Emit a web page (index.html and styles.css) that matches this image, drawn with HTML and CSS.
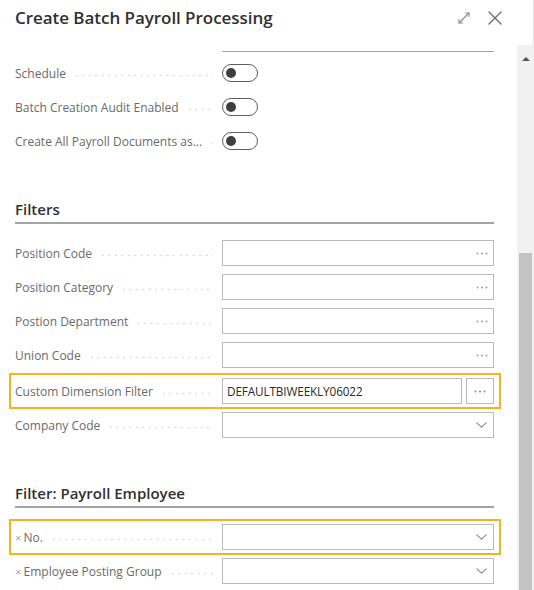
FILE: index.html
```html
<!DOCTYPE html>
<html lang="en">
<head>
<meta charset="utf-8">
<title>Create Batch Payroll Processing</title>
<link rel="stylesheet" href="styles.css">
</head>
<body>
<div class="dialog">
  <header class="dlg-head">
    <h1 class="dlg-title">Create Batch Payroll Processing</h1>
    <div class="dlg-actions">
      <button class="icon-btn" aria-label="Expand">
        <svg width="16" height="16" viewBox="0 0 16 16" fill="none" stroke="#8a8a8a" stroke-width="1.1" stroke-linecap="round" stroke-linejoin="round">
          <path d="M3 13 L13 3"/>
          <path d="M9.5 3 H13 V6.5"/>
          <path d="M3 9.5 V13 H6.5"/>
        </svg>
      </button>
      <button class="icon-btn" aria-label="Close">
        <svg width="16" height="16" viewBox="0 0 16 16" fill="none" stroke="#6a6a6a" stroke-width="1.3" stroke-linecap="round">
          <path d="M2 2 L14 14 M14 2 L2 14"/>
        </svg>
      </button>
    </div>
  </header>

  <div class="dlg-body">
    <div class="scroll-area">
      <div class="prev-rule"></div>

      <div class="fields">
        <div class="row">
          <div class="label"><span>Schedule</span><i class="leader"></i></div>
          <div class="control"><span class="toggle"><span class="knob"></span></span></div>
        </div>
        <div class="row">
          <div class="label"><span>Batch Creation Audit Enabled</span><i class="leader"></i></div>
          <div class="control"><span class="toggle"><span class="knob"></span></span></div>
        </div>
        <div class="row">
          <div class="label"><span>Create All Payroll Documents as...</span><i class="leader"></i></div>
          <div class="control"><span class="toggle"><span class="knob"></span></span></div>
        </div>
      </div>

      <section class="group">
        <h2 class="group-title">Filters</h2>
        <div class="fields">
          <div class="row">
            <div class="label"><span>Position Code</span><i class="leader"></i></div>
            <div class="control"><div class="input lookup"><svg class="dots" width="12" height="3" viewBox="0 0 12 3" fill="#a0a0a0"><circle cx="1.5" cy="1.5" r="1"/><circle cx="6" cy="1.5" r="1"/><circle cx="10.5" cy="1.5" r="1"/></svg></div></div>
          </div>
          <div class="row">
            <div class="label"><span>Position Category</span><i class="leader"></i></div>
            <div class="control"><div class="input lookup"><svg class="dots" width="12" height="3" viewBox="0 0 12 3" fill="#a0a0a0"><circle cx="1.5" cy="1.5" r="1"/><circle cx="6" cy="1.5" r="1"/><circle cx="10.5" cy="1.5" r="1"/></svg></div></div>
          </div>
          <div class="row">
            <div class="label"><span>Postion Department</span><i class="leader"></i></div>
            <div class="control"><div class="input lookup"><svg class="dots" width="12" height="3" viewBox="0 0 12 3" fill="#a0a0a0"><circle cx="1.5" cy="1.5" r="1"/><circle cx="6" cy="1.5" r="1"/><circle cx="10.5" cy="1.5" r="1"/></svg></div></div>
          </div>
          <div class="row">
            <div class="label"><span>Union Code</span><i class="leader"></i></div>
            <div class="control"><div class="input lookup"><svg class="dots" width="12" height="3" viewBox="0 0 12 3" fill="#a0a0a0"><circle cx="1.5" cy="1.5" r="1"/><circle cx="6" cy="1.5" r="1"/><circle cx="10.5" cy="1.5" r="1"/></svg></div></div>
          </div>
          <div class="row row-focus row-gap">
            <div class="label"><span>Custom Dimension Filter</span><i class="leader"></i></div>
            <div class="control split">
              <div class="input value">DEFAULTBIWEEKLY06022</div>
              <div class="input assist"><svg width="12" height="3" viewBox="0 0 12 3" fill="#8a8a8a"><circle cx="1.5" cy="1.5" r="1"/><circle cx="6" cy="1.5" r="1"/><circle cx="10.5" cy="1.5" r="1"/></svg></div>
            </div>
          </div>
          <div class="row">
            <div class="label"><span>Company Code</span><i class="leader"></i></div>
            <div class="control"><div class="input select"><svg class="chev" width="11" height="6" viewBox="0 0 11 6" fill="none" stroke="#8a8a8a" stroke-width="1.1" stroke-linecap="round" stroke-linejoin="round"><path d="M0.8 0.8 L5.5 5.2 L10.2 0.8"/></svg></div></div>
          </div>
        </div>
      </section>

      <section class="group">
        <h2 class="group-title">Filter: Payroll Employee</h2>
        <div class="fields">
          <div class="row row-focus">
            <div class="label"><span class="x">×</span><span>No.</span><i class="leader"></i></div>
            <div class="control"><div class="input select"><svg class="chev" width="11" height="6" viewBox="0 0 11 6" fill="none" stroke="#8a8a8a" stroke-width="1.1" stroke-linecap="round" stroke-linejoin="round"><path d="M0.8 0.8 L5.5 5.2 L10.2 0.8"/></svg></div></div>
          </div>
          <div class="row">
            <div class="label"><span class="x">×</span><span>Employee Posting Group</span><i class="leader"></i></div>
            <div class="control"><div class="input select"><svg class="chev" width="11" height="6" viewBox="0 0 11 6" fill="none" stroke="#8a8a8a" stroke-width="1.1" stroke-linecap="round" stroke-linejoin="round"><path d="M0.8 0.8 L5.5 5.2 L10.2 0.8"/></svg></div></div>
          </div>
        </div>
      </section>
    </div>

    <div class="scrollbar">
      <span class="scroll-up"></span>
      <div class="scroll-thumb"></div>
    </div>
  </div>
</div>
</body>
</html>
```

FILE: styles.css
```css
* {
  box-sizing: border-box;
}

html, body {
  margin: 0;
  padding: 0;
  background: #ffffff;
}

body {
  font-family: "Open Sans", "Noto Sans", sans-serif;
  color: #333333;
}

.dialog {
  width: 534px;
  height: 590px;
  display: flex;
  flex-direction: column;
  overflow: hidden;
  background: #ffffff;
}

/* ---------- header ---------- */
.dlg-head {
  height: 45px;
  flex: none;
  display: flex;
  align-items: flex-start;
  justify-content: space-between;
  padding: 6px 0 0 15px;
  border-right: 1px solid #e4e4e4;
}

.dlg-title {
  margin: 0;
  font-size: 17px;
  line-height: 24px;
  font-weight: 600;
  color: #303030;
  letter-spacing: -0.05px;
}

.dlg-actions {
  display: flex;
  gap: 15px;
  padding: 4px 30px 0 0;
}

.icon-btn {
  width: 16px;
  height: 16px;
  padding: 0;
  border: 0;
  background: none;
  display: block;
}

.icon-btn svg {
  display: block;
}

/* ---------- body ---------- */
.dlg-body {
  flex: 1;
  display: flex;
  min-height: 0;
}

.scroll-area {
  flex: 1;
  padding: 0 23px 0 15px;
  overflow: hidden;
}

.prev-rule {
  height: 1px;
  margin: 6px 0 4px 207px;
  background: #a6a6a6;
}

.fields {
  display: flex;
  flex-direction: column;
}

.row {
  position: relative;
  height: 34px;
  display: grid;
  grid-template-columns: 207px 1fr;
  align-items: center;
}

.row-gap {
  margin-top: 2px;
}

.row-focus::after {
  content: "";
  position: absolute;
  left: -6px;
  right: -7px;
  top: -1px;
  bottom: -1px;
  border: 2px solid #f4b420;
  pointer-events: none;
}

.label {
  display: flex;
  align-items: center;
  padding: 2px 9px 0 0;
  font-size: 12px;
  line-height: 16px;
  color: #6a6a6a;
  white-space: nowrap;
  min-width: 0;
}

.label .x {
  font-size: 11.5px;
  color: #a4a4a4;
  margin-right: 2px;
}

.leader {
  flex: 1;
  height: 3px;
  margin: 3px 0 0 9px;
  background-image: radial-gradient(circle at 1.5px 1.5px, #d2d2d2 0.7px, transparent 1.1px);
  background-size: 6.5px 3px;
  background-repeat: repeat-x;
}

.control {
  display: flex;
  align-items: center;
}

/* ---------- toggle ---------- */
.toggle {
  width: 36px;
  height: 18px;
  border: 1.5px solid #5e5e5e;
  border-radius: 9px;
  display: flex;
  align-items: center;
  padding-left: 3px;
}

.knob {
  width: 10px;
  height: 10px;
  border-radius: 50%;
  background: #3f3f3f;
}

/* ---------- inputs ---------- */
.input {
  height: 26px;
  border: 1px solid #bcbcbc;
  background: #ffffff;
  display: flex;
  align-items: center;
}

.lookup,
.select {
  flex: 1;
  justify-content: flex-end;
  padding-right: 5px;
}

.select {
  padding-right: 6px;
}

.chev {
  display: block;
}

.split {
  gap: 4px;
}

.value {
  flex: 1;
  padding-left: 4px;
  font-size: 11.8px;
  color: #2b2b2b;
  letter-spacing: -0.15px;
}

.assist {
  width: 28px;
  flex: none;
  justify-content: center;
}

/* ---------- section headings ---------- */
.group-title {
  margin: 41px 0 0;
  padding-bottom: 3px;
  font-size: 15px;
  line-height: 20px;
  font-weight: 600;
  color: #303030;
  border-bottom: 2px solid #a3a3a3;
}

.group .fields {
  margin-top: 12px;
}

/* ---------- scrollbar ---------- */
.scrollbar {
  width: 17px;
  flex: none;
  background: #f1f1f1;
  display: flex;
  flex-direction: column;
  align-items: center;
  padding-top: 12px;
}

.scroll-up {
  width: 0;
  height: 0;
  border-left: 4px solid transparent;
  border-right: 4px solid transparent;
  border-bottom: 4px solid #555555;
}

.scroll-thumb {
  width: 13px;
  margin-top: 192px;
  flex: 1;
  background: #c3c3c3;
}
```
